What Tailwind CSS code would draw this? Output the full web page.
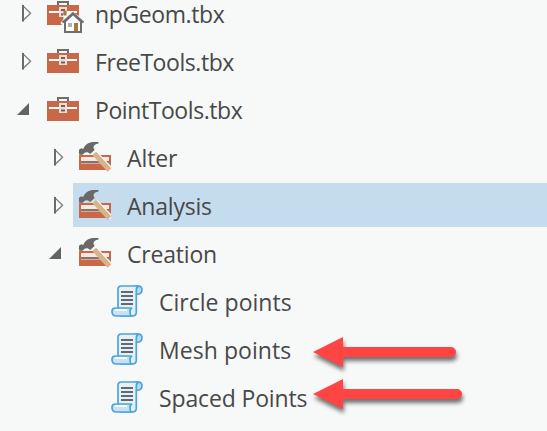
<!DOCTYPE html>
<html lang="en">
<head>
<meta charset="utf-8">
<title>Toolboxes</title>
<script src="https://cdn.jsdelivr.net/npm/@tailwindcss/browser@4"></script>
</head>
<body class="w-[547px] h-[431px] overflow-hidden bg-[#f7f9f8] font-['Open_Sans','Noto_Sans',sans-serif] text-[23px] leading-[46px] text-[#484848] whitespace-nowrap">
<svg class="hidden">
  <defs>
    <symbol id="closed" viewBox="0 0 32 48"><path d="M8 14.8V29.5L15.6 22.2Z" fill="#fafbfb" stroke="#777" stroke-width="1.2"/><path d="M8 14V30.4" stroke="#6b6b6b" stroke-width="2"/></symbol>
    <symbol id="open" viewBox="0 0 32 48"><path d="M14 16V28H2Z" fill="#636363"/></symbol>
    <symbol id="box" viewBox="0 0 32 48">
      <path d="M11 14V11H21V14" fill="none" stroke="#6d6e70" stroke-width="2"/>
      <path d="M0 14H32V34H0Z" fill="#c96848"/>
      <path d="M2 21H30" stroke="#fff" stroke-width="2"/>
      <path d="M12 16H20V26H12Z" fill="#f1ddd3"/>
      <path d="M14 19H18M14 23.5H18" stroke="#666" stroke-width="2"/>
    </symbol>
    <symbol id="set" viewBox="0 0 32 48">
      <path d="M0 20H32V35H0Z" fill="#c96848"/>
      <path d="M2 22H30V26H2Z" fill="#f3e9e4"/>
      <path d="M2 26H30V28H2Z" fill="#85736c"/>
      <path d="M2 28H30V28.7H2Z" fill="#e6c6b9"/>
      <path d="M13 19L18 16.5L32 31V36H29Z" fill="#fbf6f2"/>
      <path d="M0 19.5V14.8L2.2 13.2L4.2 14C6 9.5 10 7 15 7H19.5V8.4C16.5 8.8 14.8 10.2 14.4 12.4L15.6 15L11.2 19L8.8 17.2L6 17.4L3.2 20Z" fill="#696969"/>
      <path d="M15.2 18.4L30.4 35" stroke="#d5b48c" stroke-width="5"/>
    </symbol>
    <symbol id="script" viewBox="0 0 32 48">
      <path d="M24.5 7H28Q31 7.5 31 10.8Q31 15.3 26 15.3H24.5Z" fill="#b9dcf2" stroke="#4da2da" stroke-width="1.6"/>
      <path d="M7 29V10.5Q7 7 10.5 7H28Q25.3 8 25.3 11V33Q25.3 37 21.5 37H10L7 29Z" fill="#e3f1fa" stroke="#4da2da" stroke-width="1.7"/>
      <path d="M10 13H22M10 17H22M10 21H22M10 25H22" stroke="#686868" stroke-width="2"/>
      <path d="M4.3 29H21.2Q18.8 29.5 19 33Q19.2 37 21.5 37H5.5Q1 37 1 32.5Q1 29 4.3 29Z" fill="#c5e3f5" stroke="#4da2da" stroke-width="1.7"/>
      <path d="M4 31H16" stroke="#f1f9fd" stroke-width="2"/>
    </symbol>
  </defs>
</svg>
<ul class="-mt-[9px]">
  <li class="flex h-12 pl-[15px]">
    <svg class="w-8 h-12 shrink-0"><use href="#closed"/></svg>
    <svg class="w-8 h-12 shrink-0 overflow-visible">
      <use href="#box" width="32" height="48"/>
      <path d="M13.5 32L16.5 28L16 23.5L24 20L32 25L37 31V34H32V34.5H15.5Z" fill="#f7f9f8"/>
      <path d="M18 24.5V19.5" stroke="#a97738" stroke-width="3"/>
      <path d="M18 30.5L26 23L34 30.5V41H18Z" fill="#fff" stroke="#6d6e70" stroke-width="2"/>
      <path d="M15.5 31.5L26 22L36.5 31.5" fill="none" stroke="#6d6e70" stroke-width="2"/>
      <path d="M21 32H25V36H21Z" fill="#aeb1b5"/>
      <path d="M27 32H31V40H27Z" fill="#aa7838"/>
    </svg>
    <span class="pl-4 tracking-[-0.4px]">npGeom.tbx</span>
  </li>
  <li class="flex h-12 pl-[15px]">
    <svg class="w-8 h-12 shrink-0"><use href="#closed"/></svg>
    <svg class="w-8 h-12 shrink-0"><use href="#box"/></svg>
    <span class="pl-4 tracking-[-0.43px]">FreeTools.tbx</span>
  </li>
  <li class="flex h-12 pl-[15px]">
    <svg class="w-8 h-12 shrink-0"><use href="#open"/></svg>
    <svg class="w-8 h-12 shrink-0"><use href="#box"/></svg>
    <span class="pl-4 tracking-[-0.42px]">PointTools.tbx</span>
  </li>
  <li class="flex h-12 pl-[47px]">
    <svg class="w-8 h-12 shrink-0"><use href="#closed"/></svg>
    <svg class="w-8 h-12 shrink-0"><use href="#set"/></svg>
    <span class="pl-4 tracking-[-0.1px]">Alter</span>
  </li>
  <li class="flex h-12 pl-[47px]">
    <svg class="w-[26px] h-12 shrink-0" viewBox="0 0 26 48"><use href="#closed" width="32" height="48"/></svg>
    <div class="flex h-11 grow bg-[#c5dbee] pl-1.5">
      <svg class="w-8 h-12 shrink-0"><use href="#set"/></svg>
      <span class="pl-4 tracking-[-0.2px]">Analysis</span>
    </div>
  </li>
  <li class="flex h-12 pl-[47px]">
    <svg class="w-8 h-12 shrink-0"><use href="#open"/></svg>
    <svg class="w-8 h-12 shrink-0"><use href="#set"/></svg>
    <span class="pl-4 tracking-[-0.2px]">Creation</span>
  </li>
  <li class="flex h-12 pl-[111px]">
    <svg class="w-8 h-12 shrink-0"><use href="#script"/></svg>
    <span class="pl-4 tracking-[0.02px]">Circle points</span>
  </li>
  <li class="flex h-12 pl-[111px]">
    <svg class="w-8 h-12 shrink-0"><use href="#script"/></svg>
    <span class="pl-4 tracking-[0.05px]">Mesh points</span>
  </li>
  <li class="flex h-12 pl-[111px]">
    <svg class="w-8 h-12 shrink-0"><use href="#script"/></svg>
    <span class="pl-4 tracking-[-0.14px]">Spaced Points</span>
  </li>
</ul>
<svg class="absolute left-[300px] top-[325px] w-[180px] h-[100px] drop-shadow-[1px_4px_2px_rgba(0,0,0,0.55)]" fill="#ff4444">
  <path d="M13 27L43 12V22H151A5 5 0 0 1 151 32H43V42Z"/>
  <path d="M13 69L43 54V64H157A5 5 0 0 1 157 74H43V84Z"/>
</svg>
</body>
</html>
